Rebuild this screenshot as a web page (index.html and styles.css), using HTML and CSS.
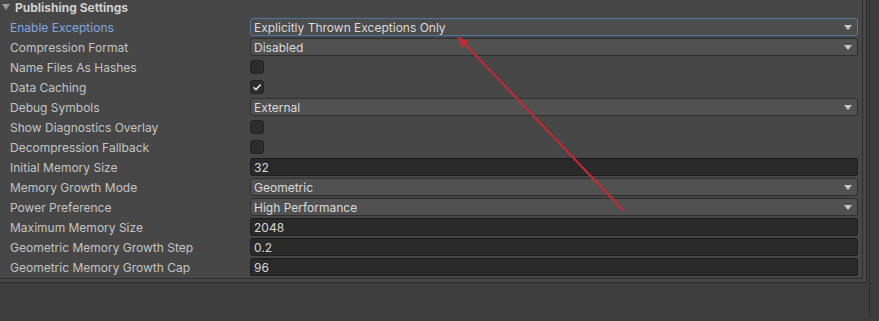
FILE: index.html
```html
<!DOCTYPE html>
<html>
<head>
<meta charset="utf-8">
<link rel="stylesheet" href="styles.css">
</head>
<body>
<div class="inspector">
  <div class="outer">
    <div class="inner">
      <div class="header"><span class="foldout"></span><span class="title">Publishing Settings</span></div>
      <div class="rows">
        <div class="row"><span class="label focused">Enable Exceptions</span><div class="dropdown focus"><span>Explicitly Thrown Exceptions Only</span><i class="caret"></i></div></div>
        <div class="row"><span class="label">Compression Format</span><div class="dropdown"><span>Disabled</span><i class="caret"></i></div></div>
        <div class="row"><span class="label">Name Files As Hashes</span><div class="check"></div></div>
        <div class="row"><span class="label">Data Caching</span><div class="check on"><svg width="10" height="10" viewBox="0 0 10 10"><path d="M1.5 5.2 L4 7.6 L8.6 2.4" fill="none" stroke="#e6e6e6" stroke-width="1.5"/></svg></div></div>
        <div class="row"><span class="label">Debug Symbols</span><div class="dropdown"><span>External</span><i class="caret"></i></div></div>
        <div class="row"><span class="label">Show Diagnostics Overlay</span><div class="check"></div></div>
        <div class="row"><span class="label">Decompression Fallback</span><div class="check"></div></div>
        <div class="row"><span class="label">Initial Memory Size</span><div class="text">32</div></div>
        <div class="row"><span class="label">Memory Growth Mode</span><div class="dropdown"><span>Geometric</span><i class="caret"></i></div></div>
        <div class="row"><span class="label">Power Preference</span><div class="dropdown"><span>High Performance</span><i class="caret"></i></div></div>
        <div class="row"><span class="label">Maximum Memory Size</span><div class="text">2048</div></div>
        <div class="row"><span class="label">Geometric Memory Growth Step</span><div class="text">0.2</div></div>
        <div class="row"><span class="label">Geometric Memory Growth Cap</span><div class="text">96</div></div>
      </div>
    </div>
  </div>
</div>
<svg class="annotation" width="879" height="321" viewBox="0 0 879 321">
  <line x1="623" y1="210" x2="463" y2="42" stroke="#c42a33" stroke-width="2"/>
  <path d="M457.5 36.5 L468.5 41.5 L462 47.5 Z" fill="#c42a33"/>
</svg>
</body>
</html>
```
FILE: styles.css
```css
html, body {
  margin: 0;
  padding: 0;
}
body {
  width: 879px;
  height: 321px;
  overflow: hidden;
  background: #3c3c3c;
  font-family: Inter, "Noto Sans", sans-serif;
  font-size: 12px;
  color: #c4c4c4;
  position: relative;
}
.inspector {
  width: 870px;
  height: 321px;
  border-right: 1px solid #2b2b2b;
  box-sizing: border-box;
  background: #3d3d3d;
}
.outer {
  width: 867px;
  box-sizing: border-box;
  background: #474747;
  border-right: 1px solid #2e2e2e;
  border-bottom: 1px solid #2e2e2e;
  padding: 0 3px 3px 0;
}
.inner {
  border-right: 1px solid #2e2e2e;
  border-bottom: 1px solid #2e2e2e;
  padding-right: 4px;
  padding-bottom: 1px;
  margin-top: -3px;
}
.header {
  height: 20px;
  display: flex;
  align-items: center;
  font-weight: 700;
  color: #d0d0d0;
}
.foldout {
  width: 0;
  height: 0;
  border-left: 4px solid transparent;
  border-right: 4px solid transparent;
  border-top: 6px solid #9a9a9a;
  margin: 0 5px 0 2px;
}
.title {
  font-size: 12px;
}
.rows {
  display: flex;
  flex-direction: column;
}
.row {
  height: 20px;
  display: grid;
  grid-template-columns: 250px 1fr;
  align-items: center;
}
.label {
  padding-left: 10px;
  white-space: nowrap;
}
.label.focused {
  color: #7fa6e0;
}
.dropdown {
  height: 18px;
  box-sizing: border-box;
  background: #515151;
  border: 1px solid #2f2f2f;
  border-radius: 3px;
  display: flex;
  align-items: center;
  justify-content: space-between;
  padding: 0 5px 0 3px;
  color: #dadada;
}
.dropdown.focus {
  border-color: #4f76a2;
  background: #4d4d4d;
}
.caret {
  width: 0;
  height: 0;
  border-left: 4px solid transparent;
  border-right: 4px solid transparent;
  border-top: 5px solid #c8c8c8;
  margin-top: 1px;
}
.text {
  height: 18px;
  box-sizing: border-box;
  background: #2a2a2a;
  border: 1px solid #1f1f1f;
  border-top-color: #181818;
  border-radius: 3px;
  display: flex;
  align-items: center;
  padding-left: 3px;
  color: #d6d6d6;
}
.check {
  width: 14px;
  height: 14px;
  box-sizing: border-box;
  background: #2d2d2d;
  border: 1px solid #232323;
  border-radius: 3px;
  display: flex;
  align-items: center;
  justify-content: center;
}
.annotation {
  position: absolute;
  left: 0;
  top: 0;
  pointer-events: none;
}
```
